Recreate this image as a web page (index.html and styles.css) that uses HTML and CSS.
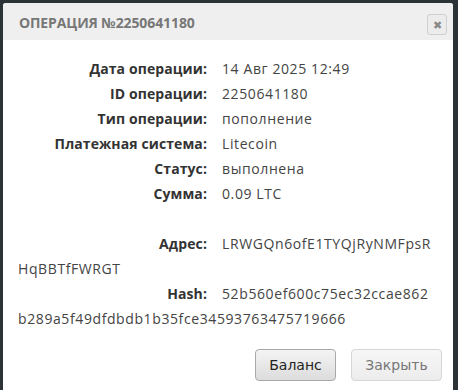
FILE: index.html
```html
<!DOCTYPE html>
<html>
<head>
<meta charset="utf-8">
<link rel="stylesheet" href="styles.css">
</head>
<body>
<div class="dialog">
  <div class="head">
    <span class="title">Операция №2250641180</span>
    <span class="close">&#x2716;</span>
  </div>
  <div class="content">
    <p class="row"><span class="lbl">Дата операции:</span><span class="val">14 Авг 2025 12:49</span></p>
    <p class="row"><span class="lbl">ID операции:</span><span class="val">2250641180</span></p>
    <p class="row"><span class="lbl">Тип операции:</span><span class="val">пополнение</span></p>
    <p class="row"><span class="lbl">Платежная система:</span><span class="val">Litecoin</span></p>
    <p class="row"><span class="lbl">Статус:</span><span class="val">выполнена</span></p>
    <p class="row"><span class="lbl">Сумма:</span><span class="val">0.09 LTC</span></p>
    <p class="row empty">&nbsp;</p>
    <p class="row"><span class="lbl">Адрес:</span><span class="val long">LRWGQn6ofE1TYQjRyNMFpsRHqBBTfFWRGT</span></p>
    <p class="row"><span class="lbl">Hash:</span><span class="val long">52b560ef600c75ec32ccae862b289a5f49dfdbdb1b35fce34593763475719666</span></p>
  </div>
  <div class="foot">
    <button class="btn primary">Баланс</button>
    <button class="btn muted">Закрыть</button>
  </div>
</div>
</body>
</html>
```
FILE: styles.css
```css
html, body {
  margin: 0;
  padding: 0;
  background: #2b3337;
  height: 390px;
  overflow: hidden;
}
.dialog {
  margin: 3px 0 0 3px;
  width: 450px;
  height: 400px;
  background: #fff;
  border-radius: 3px 3px 0 0;
  font-family: "Open Sans", sans-serif;
}
.head {
  height: 37px;
  background: #efefef;
  display: flex;
  align-items: center;
  justify-content: space-between;
  padding: 0 6px 0 16px;
  border-radius: 3px 3px 0 0;
}
.title {
  text-transform: uppercase;
  font-weight: 700;
  font-size: 14px;
  letter-spacing: -0.1px;
  color: #777;
  margin-top: 1px;
}
.close {
  width: 18px;
  height: 19px;
  border: 1px solid #d0d0d0;
  border-radius: 3px;
  background: #ececec;
  color: #8a8a8a;
  font-size: 11px;
  display: flex;
  align-items: center;
  justify-content: center;
  margin-top: 5px;
}
.content {
  padding: 16px 16px 0 15px;
}
.row {
  margin: 0;
  line-height: 25px;
  font-size: 14px;
  color: #444;
}
.lbl {
  display: inline-block;
  width: 189px;
  text-align: right;
  font-weight: 700;
  color: #333;
  margin-right: 15px;
  letter-spacing: 0.1px;
}
.val {
  letter-spacing: 0.6px;
}
.val.long {
  word-break: break-all;
}
.foot {
  display: flex;
  justify-content: flex-end;
  gap: 15px;
  padding: 18px 11px 0 0;
}
.btn {
  font-family: "DejaVu Sans", sans-serif;
  font-size: 14px;
  height: 32px;
  border-radius: 4px;
  padding: 0 12px;
}
.btn.primary {
  width: 81px;
  color: #222;
  border: 1px solid #a9a9a9;
  background: linear-gradient(#f4f4f4, #dcdcdc);
}
.btn.muted {
  width: 91px;
  color: #777;
  border: 1px solid #d6d6d6;
  background: linear-gradient(#f7f7f7, #ececec);
}
```
